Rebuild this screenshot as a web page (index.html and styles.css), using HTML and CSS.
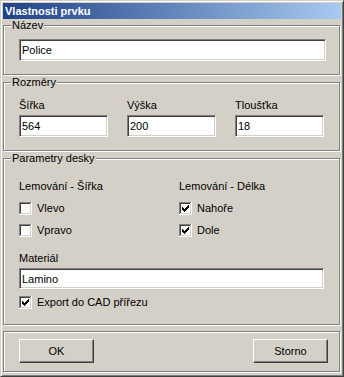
FILE: index.html
```html
<!DOCTYPE html>
<html lang="cs">
<head>
<meta charset="utf-8">
<title>Vlastnosti prvku</title>
<link rel="stylesheet" href="styles.css">
</head>
<body>
<div class="window">
  <div class="titlebar">Vlastnosti prvku</div>

  <fieldset class="group">
    <legend>Název</legend>
    <div class="group-body name-body">
      <input class="field field-name" type="text" value="Police">
    </div>
  </fieldset>

  <fieldset class="group">
    <legend>Rozměry</legend>
    <div class="group-body dims-body">
      <div class="dim">
        <span class="lbl">Šířka</span>
        <input class="field field-dim" type="text" value="564">
      </div>
      <div class="dim">
        <span class="lbl">Výška</span>
        <input class="field field-dim" type="text" value="200">
      </div>
      <div class="dim">
        <span class="lbl">Tloušťka</span>
        <input class="field field-dim" type="text" value="18">
      </div>
    </div>
  </fieldset>

  <fieldset class="group">
    <legend>Parametry desky</legend>
    <div class="group-body params-body">
      <div class="cols">
        <div class="col">
          <div class="heading">Lemování - Šířka</div>
          <div class="check-row">
            <svg class="cb" width="13" height="13" viewBox="0 0 13 13" shape-rendering="crispEdges">
              <rect width="13" height="13" fill="#fff"/>
              <rect x="0" y="0" width="12" height="1" fill="#808080"/>
              <rect x="0" y="0" width="1" height="12" fill="#808080"/>
              <rect x="1" y="1" width="10" height="1" fill="#404040"/>
              <rect x="1" y="1" width="1" height="10" fill="#404040"/>
              <rect x="1" y="11" width="11" height="1" fill="#d4d0c8"/>
              <rect x="11" y="1" width="1" height="11" fill="#d4d0c8"/>
            </svg>
            <span>Vlevo</span>
          </div>
          <div class="check-row">
            <svg class="cb" width="13" height="13" viewBox="0 0 13 13" shape-rendering="crispEdges">
              <rect width="13" height="13" fill="#fff"/>
              <rect x="0" y="0" width="12" height="1" fill="#808080"/>
              <rect x="0" y="0" width="1" height="12" fill="#808080"/>
              <rect x="1" y="1" width="10" height="1" fill="#404040"/>
              <rect x="1" y="1" width="1" height="10" fill="#404040"/>
              <rect x="1" y="11" width="11" height="1" fill="#d4d0c8"/>
              <rect x="11" y="1" width="1" height="11" fill="#d4d0c8"/>
            </svg>
            <span>Vpravo</span>
          </div>
        </div>
        <div class="col">
          <div class="heading">Lemování - Délka</div>
          <div class="check-row">
            <svg class="cb" width="13" height="13" viewBox="0 0 13 13" shape-rendering="crispEdges">
              <rect width="13" height="13" fill="#fff"/>
              <rect x="0" y="0" width="12" height="1" fill="#808080"/>
              <rect x="0" y="0" width="1" height="12" fill="#808080"/>
              <rect x="1" y="1" width="10" height="1" fill="#404040"/>
              <rect x="1" y="1" width="1" height="10" fill="#404040"/>
              <rect x="1" y="11" width="11" height="1" fill="#d4d0c8"/>
              <rect x="11" y="1" width="1" height="11" fill="#d4d0c8"/>
              <path d="M3 5h1v3h-1z M4 6h1v3h-1z M5 7h1v3h-1z M6 6h1v3h-1z M7 5h1v3h-1z M8 4h1v3h-1z M9 3h1v3h-1z" fill="#000"/>
            </svg>
            <span>Nahoře</span>
          </div>
          <div class="check-row">
            <svg class="cb" width="13" height="13" viewBox="0 0 13 13" shape-rendering="crispEdges">
              <rect width="13" height="13" fill="#fff"/>
              <rect x="0" y="0" width="12" height="1" fill="#808080"/>
              <rect x="0" y="0" width="1" height="12" fill="#808080"/>
              <rect x="1" y="1" width="10" height="1" fill="#404040"/>
              <rect x="1" y="1" width="1" height="10" fill="#404040"/>
              <rect x="1" y="11" width="11" height="1" fill="#d4d0c8"/>
              <rect x="11" y="1" width="1" height="11" fill="#d4d0c8"/>
              <path d="M3 5h1v3h-1z M4 6h1v3h-1z M5 7h1v3h-1z M6 6h1v3h-1z M7 5h1v3h-1z M8 4h1v3h-1z M9 3h1v3h-1z" fill="#000"/>
            </svg>
            <span>Dole</span>
          </div>
        </div>
      </div>
      <div class="lbl material-lbl">Materiál</div>
      <input class="field field-material" type="text" value="Lamino">
      <div class="check-row export-row">
        <svg class="cb" width="13" height="13" viewBox="0 0 13 13" shape-rendering="crispEdges">
          <rect width="13" height="13" fill="#fff"/>
          <rect x="0" y="0" width="12" height="1" fill="#808080"/>
          <rect x="0" y="0" width="1" height="12" fill="#808080"/>
          <rect x="1" y="1" width="10" height="1" fill="#404040"/>
          <rect x="1" y="1" width="1" height="10" fill="#404040"/>
          <rect x="1" y="11" width="11" height="1" fill="#d4d0c8"/>
          <rect x="11" y="1" width="1" height="11" fill="#d4d0c8"/>
          <path d="M3 5h1v3h-1z M4 6h1v3h-1z M5 7h1v3h-1z M6 6h1v3h-1z M7 5h1v3h-1z M8 4h1v3h-1z M9 3h1v3h-1z" fill="#000"/>
        </svg>
        <span>Export do CAD přířezu</span>
      </div>
    </div>
  </fieldset>

  <div class="footer">
    <button class="btn" type="button">OK</button>
    <button class="btn" type="button">Storno</button>
  </div>
</div>
</body>
</html>
```

FILE: styles.css
```css
* {
  box-sizing: border-box;
}

html, body {
  margin: 0;
  padding: 0;
  background: #d4d0c8;
}

body {
  font-family: "Liberation Sans", Arial, sans-serif;
  font-size: 11px;
  line-height: 13px;
  color: #000;
}

.window {
  width: 344px;
  height: 377px;
  background: #d4d0c8;
  border: 1px solid;
  border-color: #d4d0c8 #404040 #404040 #d4d0c8;
  box-shadow: inset 1px 1px 0 #fff, inset -1px -1px 0 #808080;
  padding: 2px;
  overflow: hidden;
}

.titlebar {
  height: 16px;
  line-height: 16px;
  padding-left: 2px;
  color: #fff;
  font-weight: bold;
  font-size: 11px;
  background: linear-gradient(90deg, #1f4287 0%, #a6caf0 100%);
  white-space: nowrap;
}

.group {
  margin: 1px 1px 0 0;
  padding: 0;
  min-width: 0;
  border: 1px solid #808080;
  box-shadow: inset 1px 1px 0 #fff, 1px 1px 0 #fff;
}

.group:first-of-type {
  margin-top: 0;
}

.group legend {
  margin-left: 7px;
  padding: 0 1px;
  height: 13px;
  line-height: 13px;
  background: #d4d0c8;
}

.name-body {
  padding: 7px 13px 13px 15px;
}

.field {
  display: block;
  height: 22px;
  margin: 0;
  padding: 0 2px;
  font-family: "Liberation Sans", Arial, sans-serif;
  font-size: 11px;
  color: #000;
  background: #fff;
  border: 1px solid;
  border-color: #808080 #fff #fff #808080;
  box-shadow: inset 1px 1px 0 #404040, inset -1px -1px 0 #d4d0c8;
  outline: none;
}

.field-name {
  width: 307px;
}

.dims-body {
  display: grid;
  grid-template-columns: 89px 89px 89px;
  column-gap: 19px;
  padding: 10px 0 13px 15px;
}

.dim {
  display: flex;
  flex-direction: column;
}

.lbl {
  display: block;
  height: 13px;
  line-height: 13px;
}

.dim .lbl {
  margin-bottom: 3px;
}

.field-dim {
  width: 89px;
}

.params-body {
  padding: 15px 0 15px 15px;
}

.cols {
  display: grid;
  grid-template-columns: 160px 1fr;
}

.col {
  display: flex;
  flex-direction: column;
  gap: 9px;
}

.heading {
  height: 13px;
  line-height: 13px;
}

.check-row {
  display: flex;
  align-items: center;
  gap: 5px;
  height: 13px;
  line-height: 13px;
  white-space: nowrap;
}

.cb {
  display: block;
  flex: none;
}

.material-lbl {
  margin-top: 15px;
}

.field-material {
  width: 305px;
  height: 21px;
  margin-top: 3px;
}

.export-row {
  margin-top: 7px;
}

.footer {
  margin: 6px 1px 0 0;
  height: 41px;
  display: flex;
  justify-content: space-between;
  align-items: flex-start;
  padding: 7px 11px 0 15px;
  border: 1px solid #808080;
  box-shadow: inset 1px 1px 0 #fff, 1px 1px 0 #fff;
}

.btn {
  width: 75px;
  height: 24px;
  margin: 0;
  padding: 0;
  font-family: "Liberation Sans", Arial, sans-serif;
  font-size: 11px;
  color: #000;
  background: #d4d0c8;
  border: 1px solid;
  border-color: #fff #404040 #404040 #fff;
  box-shadow: inset -1px -1px 0 #808080;
  border-radius: 0;
}
```
